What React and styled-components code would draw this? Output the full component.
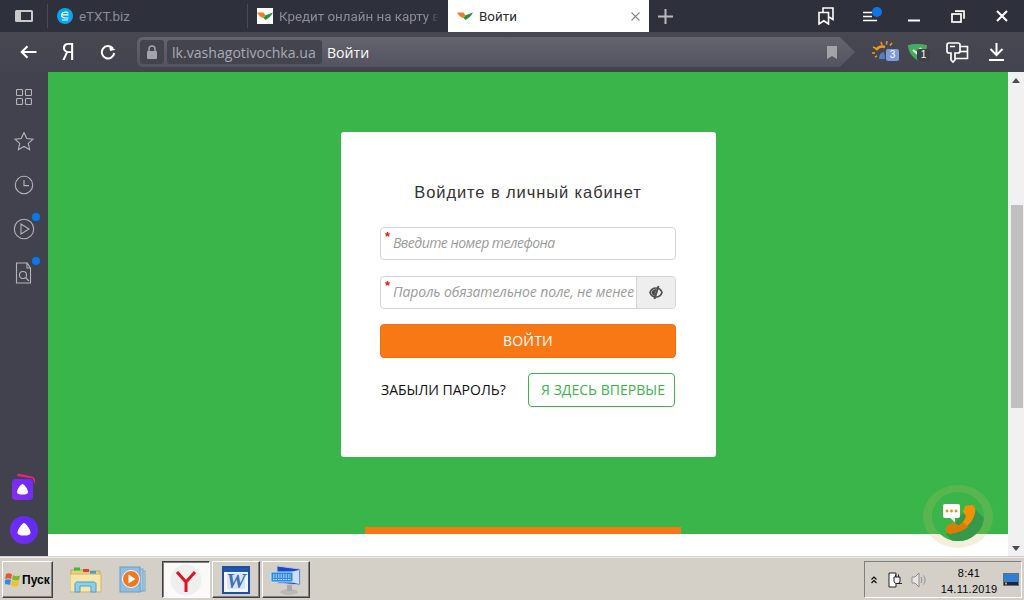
import React from "react";
import styled, { createGlobalStyle } from "styled-components";

const Global = createGlobalStyle`
  html, body { margin: 0; padding: 0; width: 1024px; height: 600px; overflow: hidden; background: #d4d0c8; }
  * { box-sizing: border-box; }
`;

const Screen = styled.div`
  width: 1024px; height: 600px; display: flex; flex-direction: column; position: relative; overflow: hidden;
  font-family: "Roboto", "Liberation Sans", sans-serif;
`;

/* ---------- tab strip ---------- */
const TabStrip = styled.div`
  height: 32px; flex: none; display: flex; align-items: stretch; background: #2e303b;
`;
const PanelToggle = styled.div`
  width: 48px; display: flex; align-items: center; justify-content: center;
  position: relative;
  &::after { content: ""; position: absolute; right: 0; top: 4px; height: 24px; width: 1px; background: #4a4b56; }
`;
const Tab = styled.div`
  width: ${p => p.$w}px; display: flex; align-items: center; padding-left: 9px; gap: 6px; position: relative;
  background: ${p => (p.$active ? "#ffffff" : "transparent")};
  color: ${p => (p.$active ? "#2d2d2d" : "#8b8c95")};
  font-size: 13.4px; white-space: nowrap;
  ${p => p.$sep && `&::after { content: ""; position: absolute; right: 0; top: 4px; height: 24px; width: 1px; background: #4a4b56; }`}
`;
const TabTitle = styled.span`
  display: block; overflow: hidden; flex: none; width: ${p => p.$w}px;
  ${p => p.$fade && `letter-spacing: -0.02px; -webkit-mask-image: linear-gradient(90deg, #000 92%, transparent 100%); mask-image: linear-gradient(90deg, #000 92%, transparent 100%);`}
`;
const TabClose = styled.span`
  margin-left: auto; margin-right: 9px; display: flex;
`;
const NewTab = styled.div`
  width: 32px; display: flex; align-items: center; justify-content: center;
`;
const StripTools = styled.div`
  margin-left: auto; display: flex; align-items: center; height: 100%;
`;
const StripTool = styled.div`
  width: ${p => p.$w || 44}px; height: 100%; display: flex; align-items: center; justify-content: center; position: relative;
`;
const Dot = styled.span`
  position: absolute; width: ${p => p.$s || 9}px; height: ${p => p.$s || 9}px; border-radius: 50%; background: #0a78e8;
  top: ${p => p.$t}px; left: ${p => p.$l}px;
`;

/* ---------- toolbar ---------- */
const Toolbar = styled.div`
  height: 40px; flex: none; display: flex; align-items: center; background: linear-gradient(180deg, #474852 0%, #42434e 100%);
`;
const NavButton = styled.div`
  width: 40px; height: 40px; display: flex; align-items: center; justify-content: center; flex: none; color: #fff;
`;
const NavGroup = styled.div`
  display: flex; padding-left: 8px; flex: none; width: 137px;
`;
const YaLetter = styled.span`
  font: 400 23px "Roboto", sans-serif; color: #fff; display: block; transform: scaleX(0.92);
`;
const AddressBar = styled.div`
  width: 718px; height: 30px; flex: none; display: flex; align-items: center; padding: 0 3px;
  gap: 3px; background: linear-gradient(180deg, #63646e 0%, #53545f 100%);
  border-radius: 6px 0 0 6px;
  clip-path: polygon(0 0, 97.9% 0, 100% 50%, 97.9% 100%, 0 100%);
`;
const LockBox = styled.div`
  width: 24px; height: 24px; border-radius: 3px; background: #43444e; display: flex; align-items: center; justify-content: center; flex: none;
`;
const HostBox = styled.div`
  height: 24px; width: 155px; border-radius: 3px; background: #43444e; color: #a9aab1; flex: none;
  display: flex; align-items: center; padding-left: 5px; font: 400 14.1px "Open Sans", sans-serif; white-space: nowrap; overflow: hidden;
`;
const PageTitle = styled.span`
  color: #fff; font: 400 14.1px "Open Sans", sans-serif; margin-left: 2px;
`;
const BookmarkSlot = styled.div`
  margin-left: auto; margin-right: 15px; display: flex;
`;
const Extensions = styled.div`
  flex: 1; display: flex; align-items: center; padding-left: 16px;
`;
const ExtSlot = styled.div`
  width: ${p => p.$w}px; height: 40px; display: flex; align-items: center; justify-content: center; position: relative; flex: none;
`;
const Badge = styled.span`
  position: absolute; left: ${p => p.$l}px; top: 17px; width: 13px; height: 12px; border-radius: 2px;
  background: ${p => p.$bg}; color: #fff; font: 400 10px/12px "Liberation Sans", sans-serif; text-align: center;
`;

/* ---------- body ---------- */
const Body = styled.div`
  flex: 1; min-height: 0; display: flex; position: relative;
`;
const Sidebar = styled.div`
  width: 48px; flex: none; background: #41424e; display: flex; flex-direction: column; align-items: center; padding: 3px 0 12px;
`;
const SideItem = styled.div`
  width: 48px; height: 44px; flex: none; display: flex; align-items: center; justify-content: center; position: relative;
`;
const SideBottom = styled.div`
  margin-top: auto; display: flex; flex-direction: column; align-items: center; gap: 16px;
`;
const Page = styled.div`
  flex: 1; display: flex; flex-direction: column; background: #fff; min-width: 0;
`;
const Green = styled.div`
  height: 462px; flex: none; background: #39b54a; display: flex; flex-direction: column; align-items: center; padding-top: 60px;
`;
const FooterBar = styled.div`
  margin-top: auto; width: 316px; height: 7px; background: #f97816; margin-left: -10px;
`;
const Card = styled.div`
  width: 375px; height: 325px; background: #fff; border-radius: 3px; padding: 50px 40px 0 39px; margin-left: 1px;
  display: flex; flex-direction: column;
`;
const Title = styled.h1`
  margin: 0 0 25px; height: 20px; font: 400 16.5px/20px "Liberation Sans", sans-serif; letter-spacing: 0.9px; color: #333; text-align: center;
`;
const Field = styled.div`
  height: 33px; width: 296px; display: flex; margin-bottom: 16px; position: relative;
  border: 1px solid #d4d4d4; border-radius: 4px; background: #fff; overflow: hidden;
`;
const Required = styled.span`
  position: absolute; left: 4px; top: 2px; color: #e8141c; font: 700 13px/13px "Liberation Sans", sans-serif;
`;
const Hint = styled.span`
  flex: 1; padding-left: 12px; font: italic 400 14px/29px "Open Sans", sans-serif; letter-spacing: ${p => p.$ls}px; color: #9b9b9b; white-space: nowrap; overflow: hidden;
`;
const EyeCell = styled.div`
  width: 39px; flex: none; background: #eeeeee; border-left: 1px solid #d4d4d4; display: flex; align-items: center; justify-content: center;
`;
const Primary = styled.div`
  width: 296px; height: 34px; margin-top: -1px; background: #f97816; border: 1px solid #ee7010; border-radius: 4px;
  color: #fff; font: 400 14px/32px "Open Sans", sans-serif; letter-spacing: 0.2px; text-align: center;
`;
const Row = styled.div`
  display: flex; align-items: center; justify-content: space-between; margin-top: 15px; width: 295px;
`;
const Forgot = styled.span`
  font: 400 14px "Open Sans", sans-serif; color: #111; padding-left: 1px; margin-top: -2px;
`;
const Outline = styled.div`
  width: 147px; height: 34px; border: 1px solid #39b54a; border-radius: 4px; color: #39b54a; text-align: right; padding-right: 9px;
  font: 400 14px/32px "Open Sans", sans-serif; letter-spacing: 0.03px;
`;
const BottomStrip = styled.div`
  flex: 1;
`;
const Scrollbar = styled.div`
  width: 16px; flex: none; background: #f1f1f1; display: flex; flex-direction: column; align-items: center; position: relative;
`;
const ArrowBtn = styled.div`
  width: 16px; height: 16px; flex: none; display: flex; align-items: center; justify-content: center; margin-top: ${p => p.$mt || 0}px;
`;
const Thumb = styled.div`
  width: 12px; height: 203px; background: #c0c0c0; margin-top: 117px; flex: none; margin-left: 1px;
`;
const CallWidget = styled.div`
  position: absolute; left: 923px; top: 413px; width: 70px; height: 63px; border-radius: 50%; overflow: hidden;
  border-style: solid; border-width: 7px 9px; border-color: rgba(205, 180, 90, 0.22);
  background: #39b54a; background-clip: padding-box;
  & > svg { display: block; }
`;

/* ---------- taskbar ---------- */
const Taskbar = styled.div`
  height: 44px; flex: none; background: #d4d0c8; border-top: 1px solid #d4d0c8; box-shadow: inset 0 2px 0 -1px #efece6;
  display: flex; align-items: center; padding: 2px 2px 0 2px;
`;
const StartButton = styled.div`
  width: 51px; height: 37px; flex: none; display: flex; align-items: center; gap: 0; padding-left: 2px;
  border: 1px solid; border-color: #fff #404040 #404040 #fff; box-shadow: inset -1px -1px 0 #808080;
  font: 700 12px "Liberation Sans", sans-serif; color: #000;
`;
const QuickSlot = styled.div`
  width: 48px; height: 37px; flex: none; display: flex; align-items: center; justify-content: center; margin-left: ${p => p.$ml || 0}px;
`;
const TaskButton = styled.div`
  width: 48px; height: 37px; flex: none; display: flex; align-items: center; justify-content: center; margin-left: ${p => p.$ml || 2}px;
  border: 1px solid; border-color: ${p => (p.$down ? "#404040 #fff #fff #404040" : "#fff #404040 #404040 #fff")};
  box-shadow: ${p => (p.$down ? "inset 1px 1px 0 #808080" : "inset -1px -1px 0 #808080")};
  background: ${p => (p.$down ? "#fbfaf8" : "#d4d0c8")};
`;
const Tray = styled.div`
  margin-left: auto; width: 158px; height: 37px; flex: none; display: flex; align-items: center; padding-left: 5px;
  border: 1px solid; border-color: #808080 #fff #fff #808080;
`;
const TrayIcon = styled.div`
  width: ${p => p.$w}px; display: flex; justify-content: center; flex: none; margin-left: ${p => p.$ml || 0}px;
`;
const Clock = styled.div`
  width: 62px; flex: none; text-align: center; font: 400 11px/16px "Liberation Sans", sans-serif; letter-spacing: 0.25px; color: #000; margin: 2px 0 0 7px;
`;

/* ---------- icons ---------- */
const Logo = ({ bg }) => (
  <svg width="16" height="16" viewBox="0 0 16 16">
    {bg && <rect width="16" height="16" fill="#fff" />}
    <path d="M0 4.500h6.500l2 2.800-2 2.700C4 9.800 1.500 7.500 0 4.500z" fill="#f47d20" />
    <path d="M6.500 10l2-2.700L16 4.500c-1.500 3-4 6-7.500 7.500z" fill="#2f8f3c" />
  </svg>
);
const Svg = ({ w = 20, h = 20, children, ...r }) => (
  <svg width={w} height={h} viewBox={`0 0 ${w} ${h}`} fill="none" {...r}>{children}</svg>
);
const S = { stroke: "#fff", strokeWidth: 2 };
const G = { stroke: "#b4b5bb", strokeWidth: 1.1 };

export default function App() {
  return (
    <Screen>
      <Global />
      <TabStrip>
        <PanelToggle>
          <Svg w={18} h={12}>
            <rect x="0" y="0" width="18" height="12" rx="1.5" fill="#c9c9cc" />
            <rect x="6" y="2" width="10" height="8" fill="#2e303b" />
          </Svg>
        </PanelToggle>
        <Tab $w={200} $sep>
          <Svg w={16} h={16}>
            <circle cx="8" cy="8" r="8" fill="#0aa5f0" />
            <path d="M4.500 6.800h7M11.300 5.200C10.500 3.800 5.500 3.600 4.700 6.200 4 8.700 6 10 8 10h3.500M5 12h6" stroke="#fff" strokeWidth="1.2" />
          </Svg>
          <TabTitle $w={160}>eTXT.biz</TabTitle>
        </Tab>
        <Tab $w={200}>
          <Logo bg />
          <TabTitle $w={160} $fade>Кредит онлайн на карту в</TabTitle>
        </Tab>
        <Tab $w={201} $active>
          <Logo />
          <TabTitle $w={60}>Войти</TabTitle>
          <TabClose>
            <Svg w={9} h={9}><path d="M.5.5l8 8M8.500.5l-8 8" stroke="#8a8a8a" strokeWidth="1.1" /></Svg>
          </TabClose>
        </Tab>
        <NewTab>
          <Svg w={15} h={15}><path d="M7.500 0v15M0 7.500h15" stroke="#b9bac0" strokeWidth="2" /></Svg>
        </NewTab>
        <StripTools>
          <StripTool $w={44}>
            <Svg w={16} h={18}>
              <path d="M1 5.500h9.500v11.500l-4.700-3.200L1 17z" stroke="#fff" strokeWidth="1.6" />
              <path d="M5 5V1h10v11.500l-4-2.500" stroke="#fff" strokeWidth="1.6" />
            </Svg>
          </StripTool>
          <StripTool $w={44}>
            <Svg w={15} h={11}>
              <path d="M0 1.500h9M0 5.500h9M0 9.500h14" stroke="#fff" strokeWidth="1.3" />
            </Svg>
            <Dot $s={10} $t={7} $l={24} />
          </StripTool>
          <StripTool $w={44}>
            <Svg w={12} h={12}><path d="M0 10.500h12" {...S} /></Svg>
          </StripTool>
          <StripTool $w={44}>
            <Svg w={14} h={13}>
              <rect x="1" y="4" width="9" height="8" stroke="#fff" strokeWidth="1.7" />
              <path d="M4 1.200h9v7.500" stroke="#fff" strokeWidth="1.7" />
            </Svg>
          </StripTool>
          <StripTool $w={44}>
            <Svg w={12} h={12}><path d="M1 1l10 10M11 1L1 11" {...S} /></Svg>
          </StripTool>
        </StripTools>
      </TabStrip>

      <Toolbar>
        <NavGroup>
          <NavButton>
            <Svg w={17} h={14}><path d="M16.500 7H2M7.500 1.200 1.700 7l5.800 5.800" {...S} /></Svg>
          </NavButton>
          <NavButton><YaLetter>Я</YaLetter></NavButton>
          <NavButton>
            <Svg w={16} h={16}>
              <path d="M12.800 4.200A6.200 6.200 0 1 0 14.200 9" {...S} />
              <path d="M9.500 1v5.500H15z" fill="#fff" transform="rotate(-12 12 4)" />
            </Svg>
          </NavButton>
        </NavGroup>
        <AddressBar>
          <LockBox>
            <Svg w={12} h={14}>
              <path d="M3 6V4a3 3 0 0 1 6 0v2" stroke="#a3a4aa" strokeWidth="1.5" />
              <rect x="1" y="6" width="10" height="8" rx="1" fill="#a3a4aa" />
            </Svg>
          </LockBox>
          <HostBox>lk.vashagotivochka.ua</HostBox>
          <PageTitle>Войти</PageTitle>
          <BookmarkSlot>
            <Svg w={10} h={13}><path d="M0 0h10v13L5 10 0 13z" fill="#a3a4aa" /></Svg>
          </BookmarkSlot>
        </AddressBar>
        <Extensions>
          <ExtSlot $w={28}>
            <Svg w={26} h={22}>
              <path d="M4 9a8 8 0 0 1 9-3" stroke="#f29a1f" strokeWidth="2.4" />
              <path d="M9 1l1 3M15 0l-.6 3.500M20 2l-2 2.500M1 6l3 1.500M0 12h3M3 16l2-1" stroke="#f29a1f" strokeWidth="1.5" />
              <path d="M7 18c0-5 3-7 4-7s2 2 2 7z" fill="#5b79c4" />
            </Svg>
            <Badge $l={15} $bg="#7f9bd8">3</Badge>
          </ExtSlot>
          <ExtSlot $w={38}>
            <Svg w={22} h={20}>
              <path d="M1 3C5 1.500 15 1.500 20 3c0 8-4 13-9 16C6 15 1 11 1 3z" fill="#46ab5e" />
              <path d="M6 8l3.500 3L14 6" stroke="#d8efd9" strokeWidth="2" />
            </Svg>
            <Badge $l={18} $bg="#3f4045">1</Badge>
          </ExtSlot>
          <ExtSlot $w={40}>
            <Svg w={23} h={21}>
              <path d="M9 4.500h12.500v12H9" stroke="#fff" strokeWidth="1.6" />
              <path d="M11 9.500h10" stroke="#fff" strokeWidth="1.6" />
              <path d="M3 1h9c1.500 0 2 1 2 2v6c0 1-.5 2-2 2H9v7l-2 2-2-2v-7H3c-1 0-2-1-2-2V3c0-1 1-2 2-2z" fill="#43444f" stroke="#fff" strokeWidth="1.7" />
              <path d="M4 4.500h5" stroke="#fff" strokeWidth="1.5" />
            </Svg>
          </ExtSlot>
          <ExtSlot $w={38}>
            <Svg w={15} h={18}><path d="M7.500 0v11.500M1.500 6l6 6 6-6M0 17h15" {...S} /></Svg>
          </ExtSlot>
        </Extensions>
      </Toolbar>

      <Body>
        <Sidebar>
          <SideItem>
            <Svg w={16} h={16}>
              <g {...G}>
                <rect x=".5" y=".5" width="6" height="6" rx="1" />
                <rect x="9.500" y=".5" width="6" height="6" rx="1" />
                <rect x=".5" y="9.500" width="6" height="6" rx="1" />
                <rect x="9.500" y="9.500" width="6" height="6" rx="1" />
              </g>
            </Svg>
          </SideItem>
          <SideItem>
            <Svg w={20} h={19}><path d="M10 .5l2.700 6 6.300.7-4.700 4.200 1.300 6.300L10 14.500l-5.600 3.200 1.300-6.300L1 7.200 7.300 6.500z" {...G} /></Svg>
          </SideItem>
          <SideItem>
            <Svg w={20} h={20}><circle cx="10" cy="10" r="8.700" {...G} /><path d="M10 5v5.600h5" {...G} /></Svg>
          </SideItem>
          <SideItem>
            <Svg w={22} h={22}><circle cx="11" cy="11" r="9.700" {...G} /><path d="M8 6l8 5-8 5z" {...G} /></Svg>
            <Dot $t={6} $l={32} $s={8} />
          </SideItem>
          <SideItem>
            <Svg w={18} h={22}>
              <path d="M12 1H1.500v20h14V6L12 1v5h3.500" {...G} />
              <circle cx="8" cy="13" r="3.500" {...G} />
              <path d="M10.500 15.500l3.500 3.500" {...G} />
            </Svg>
            <Dot $t={6} $l={32} $s={8} />
          </SideItem>
          <SideBottom>
            <Svg w={26} h={28}>
              <defs>
                <linearGradient id="al1" x1="0" y1="1" x2="1" y2="0">
                  <stop offset="0" stopColor="#8a2cf5" /><stop offset="1" stopColor="#6a2cf5" />
                </linearGradient>
                <linearGradient id="al2" x1="0" y1="1" x2="1" y2="0">
                  <stop offset="0" stopColor="#7a2cf5" /><stop offset="1" stopColor="#5a2cf5" />
                </linearGradient>
              </defs>
              <path d="M7 1.500l14 3c1.500.4 3 2 3 3v5l-2.500-6L6 4z" fill="#f21f7c" />
              <rect x="1" y="7" width="21" height="21" rx="4" fill="url(#al1)" />
              <path d="M11.500 12c1.500 0 5.500 5.500 5.500 8 0 2-2.500 2.500-5.500 2.500S6 22 6 20c0-2.500 4-8 5.500-8z" fill="#fff" />
            </Svg>
            <Svg w={28} h={28}>
              <circle cx="14" cy="14" r="14" fill="url(#al2)" />
              <path d="M14 7c1.800 0 6.500 6.500 6.500 9.500 0 2.500-3 3-6.500 3s-6.500-.5-6.500-3C7.500 13.500 12.200 7 14 7z" fill="#fff" />
            </Svg>
          </SideBottom>
        </Sidebar>
        <Page>
          <Green>
            <Card>
              <Title>Войдите в личный кабинет</Title>
              <Field>
                <Required>*</Required>
                <Hint $ls={-0.53}>Введите номер телефона</Hint>
              </Field>
              <Field>
                <Required>*</Required>
                <Hint $ls={-0.12}>Пароль обязательное поле, не менее</Hint>
                <EyeCell>
                  <Svg w={16} h={15}>
                    <path d="M2 7.500C3 4.500 5.500 3 8 3s5 1.500 6 4.500C13 10.500 10.500 12 8 12S3 10.500 2 7.500z" stroke="#505050" strokeWidth="1.7" />
                    <path d="M3.500 7.500C4 5 6 4 8.500 4L6.500 11C5 10.500 4 9.500 3.500 7.500z" fill="#505050" />
                    <path d="M10.500 1L6.500 14" stroke="#505050" strokeWidth="2" />
                  </Svg>
                </EyeCell>
              </Field>
              <Primary>ВОЙТИ</Primary>
              <Row>
                <Forgot>ЗАБЫЛИ ПАРОЛЬ?</Forgot>
                <Outline>Я ЗДЕСЬ ВПЕРВЫЕ</Outline>
              </Row>
            </Card>
            <FooterBar />
          </Green>
          <BottomStrip />
        </Page>
        <Scrollbar>
          <ArrowBtn><Svg w={8} h={5}><path d="M4 0l4 5H0z" fill="#4a4a52" /></Svg></ArrowBtn>
          <Thumb />
          <ArrowBtn $mt={132}><Svg w={8} h={5}><path d="M4 5l4-5H0z" fill="#4a4a52" /></Svg></ArrowBtn>
        </Scrollbar>
        <CallWidget>
          <Svg w={52} h={49}>
            <path d="M38 12L60 34V60H30L14 42z" fill="#36994a" />
            <path d="M33 14L39 13C43 13 44 17 43 21C41 31 31 40 19 41.500C15 42 13 39 14 36L16 33L23 31L26 34C30 32 33 28 34 24L31 20Z" fill="#f29105" />
            <path d="M14 36L16 33L23 31L26 34C28 33 30 31 31 30L36 35C31 39 25 41 19 41.500C15 42 13 39 14 36Z" fill="#dc7d00" />
            <rect x="11" y="12" width="17" height="14" rx="2" fill="#fff" />
            <path d="M18 25.500l5 5v-5z" fill="#fff" />
            <circle cx="15" cy="19" r="1.400" fill="#f29105" />
            <circle cx="19.500" cy="19" r="1.400" fill="#f29105" />
            <circle cx="24" cy="19" r="1.400" fill="#f29105" />
          </Svg>
        </CallWidget>
      </Body>

      <Taskbar>
        <StartButton>
          <Svg w={17} h={15}>
            <path d="M1 2c2-1 4-1 6 .5L6 7C4 6 2.500 6 0 7z" fill="#e05a2a" />
            <path d="M8 3c2 1.500 4 1.500 7 .5l-1 4.500c-3 1-5 .5-7-.5z" fill="#7cb82f" />
            <path d="M0 8c2.500-1 4-1 6 0l-1 5c-2-1-4-1-6 0z" fill="#2f8ee0" />
            <path d="M7 8.500c2 1 4 1.500 7 .5l-1 5c-3 1-5 .5-7-.5z" fill="#f2c01f" />
          </Svg>
          <span>Пуск</span>
        </StartButton>
        <QuickSlot $ml={9}>
          <Svg w={32} h={28}>
            <path d="M1 4h12l2 1h15v5H1z" fill="#e7cf86" stroke="#c2a65c" />
            <rect x="4" y="1.500" width="6" height="3" fill="#3bbf3b" />
            <rect x="13" y="3" width="6" height="3" fill="#d9432f" />
            <rect x="20" y="5" width="6" height="3" fill="#3aa0e0" />
            <path d="M0 8h31v18H0z" fill="#f6e7a8" stroke="#cdb571" />
            <path d="M5 26V18c0-1 1-2 2-2h17c1 0 2 1 2 2v8h-5v-6H10v6z" fill="#8cd0ef" stroke="#4a9fcd" />
          </Svg>
        </QuickSlot>
        <QuickSlot>
          <Svg w={30} h={28}>
            <rect x="12" y="5" width="14" height="20" fill="#b6d4ea" stroke="#7ca6c8" />
            <rect x="7" y="3" width="17" height="22" fill="#a3c9e6" stroke="#7ca6c8" />
            <rect x="1" y="1" width="20" height="25" fill="#8dbde2" stroke="#6a9cc4" />
            <circle cx="12" cy="13" r="8.500" fill="#ef7a1d" stroke="#fff" strokeWidth="1" />
            <path d="M9.500 8.500l7 4.500-7 4.500z" fill="#fff" />
          </Svg>
        </QuickSlot>
        <TaskButton $down $ml={4}>
          <Svg w={32} h={32}>
            <circle cx="16" cy="16" r="15.500" fill="#efefef" />
            <path d="M7 8l9 10v10M25 8l-9 10" stroke="#e0131c" strokeWidth="3" />
          </Svg>
        </TaskButton>
        <TaskButton>
          <Svg w={28} h={28}>
            <rect x="1" y="1" width="26" height="26" fill="#f4f6fa" stroke="#1d4f9e" strokeWidth="2" />
            <rect x="2" y="2" width="24" height="4" fill="#1f57ad" />
            <path d="M5 7h18v16H5z" fill="#dbe5f5" />
            <text x="14" y="22" textAnchor="middle" fontFamily="Liberation Serif" fontStyle="italic" fontWeight="700" fontSize="22" fill="#3d72bb">W</text>
          </Svg>
        </TaskButton>
        <TaskButton>
          <Svg w={32} h={30}>
            <path d="M7 1l23 3v16L7 18z" fill="#1c49c4" stroke="#b9c6da" />
            <path d="M16 8l13-3v14l-9-2z" fill="#cfe0f6" />
            <rect x="1" y="7" width="22" height="10" rx="1" fill="#2f8be0" stroke="#c6def4" />
            <path d="M3 10h18M3 12h18M3 14.500h18" stroke="#d4e8fa" strokeWidth="1" strokeDasharray="1.500 1" />
            <ellipse cx="19" cy="27" rx="9" ry="3" fill="#b9b9b9" />
            <rect x="17" y="20" width="5" height="6" fill="#a9a9a9" />
          </Svg>
        </TaskButton>
        <Tray>
          <TrayIcon $w={8}>
            <Svg w={6} h={8}><path d="M.5 3.500L3 1l2.500 2.500M.5 7L3 4.500 5.500 7" stroke="#000" strokeWidth="1.100" /></Svg>
          </TrayIcon>
          <TrayIcon $w={24} $ml={5}>
            <Svg w={16} h={16}>
              <path d="M2 1h7v14H2z" fill="#fff" stroke="#222" />
              <path d="M7 5h6v4c0 1.500-1 2.500-3 2.500S7 10.500 7 9z" fill="#f4f4f4" stroke="#222" />
              <path d="M8.500 2.500V5M11.500 2.500V5M10 11.500h5" stroke="#222" />
            </Svg>
          </TrayIcon>
          <TrayIcon $w={24}>
            <Svg w={16} h={16}>
              <path d="M1 5h3l4-4v14l-4-4H1z" fill="#e9e7e2" stroke="#8d8d8d" />
              <path d="M10 5c1 1.500 1 4.500 0 6M12.500 3.500c2 2.500 2 6.500 0 9" stroke="#8d8d8d" />
            </Svg>
          </TrayIcon>
          <Clock>8:41<br />14.11.2019</Clock>
          <TrayIcon $w={16} $ml={3}>
            <Svg w={16} h={13}>
              <rect x=".5" y=".5" width="15" height="12" fill="#2f7fd0" stroke="#5d6f88" />
              <rect x="1" y="9" width="14" height="3" fill="#23252b" />
              <rect x="2" y="9.500" width="2" height="2" fill="#e8a020" />
            </Svg>
          </TrayIcon>
        </Tray>
      </Taskbar>
    </Screen>
  );
}
